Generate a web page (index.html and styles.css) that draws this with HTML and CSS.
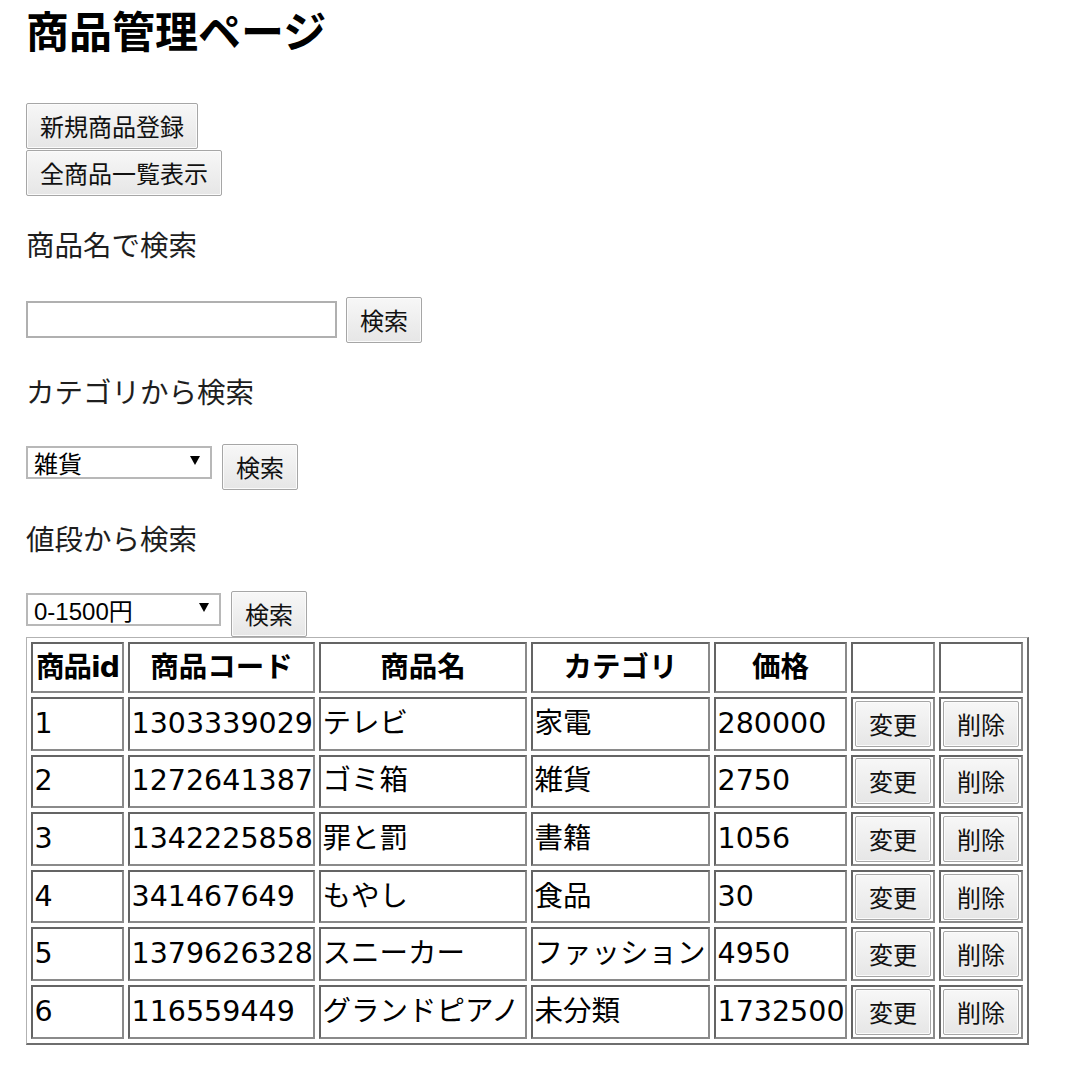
FILE: index.html
```
<!DOCTYPE html>
<html lang="ja">
<head>
<meta charset="utf-8">
<title>商品管理ページ</title>
<link rel="stylesheet" href="styles.css">
</head>
<body>
<h1 class="title">商品管理ページ</h1>

<div class="actions">
  <button class="btn" type="button">新規商品登録</button>
  <button class="btn" type="button">全商品一覧表示</button>
</div>

<p class="label">商品名で検索</p>
<div class="search-row">
  <input class="text-input" type="text">
  <button class="btn" type="button">検索</button>
</div>

<p class="label">カテゴリから検索</p>
<div class="search-row">
  <span class="select-wrap select-category">
    <select class="select">
      <option>雑貨</option>
      <option>家電</option>
      <option>書籍</option>
      <option>食品</option>
      <option>ファッション</option>
      <option>未分類</option>
    </select>
    <span class="select-arrow"></span>
  </span>
  <button class="btn" type="button">検索</button>
</div>

<p class="label">値段から検索</p>
<div class="search-row">
  <span class="select-wrap select-price">
    <select class="select">
      <option>0-1500円</option>
      <option>1501-10000円</option>
      <option>10001円以上</option>
    </select>
    <span class="select-arrow"></span>
  </span>
  <button class="btn" type="button">検索</button>
</div>

<table class="products">
  <tr class="head">
    <th class="c-id">商品id</th>
    <th class="c-code">商品コード</th>
    <th class="c-name">商品名</th>
    <th class="c-cat">カテゴリ</th>
    <th class="c-price">価格</th>
    <th class="c-edit"></th>
    <th class="c-del"></th>
  </tr>
  <tr>
    <td>1</td><td>1303339029</td><td>テレビ</td><td>家電</td><td>280000</td>
    <td><button class="btn cell-btn" type="button">変更</button></td>
    <td><button class="btn cell-btn" type="button">削除</button></td>
  </tr>
  <tr>
    <td>2</td><td>1272641387</td><td>ゴミ箱</td><td>雑貨</td><td>2750</td>
    <td><button class="btn cell-btn" type="button">変更</button></td>
    <td><button class="btn cell-btn" type="button">削除</button></td>
  </tr>
  <tr>
    <td>3</td><td>1342225858</td><td>罪と罰</td><td>書籍</td><td>1056</td>
    <td><button class="btn cell-btn" type="button">変更</button></td>
    <td><button class="btn cell-btn" type="button">削除</button></td>
  </tr>
  <tr>
    <td>4</td><td>341467649</td><td>もやし</td><td>食品</td><td>30</td>
    <td><button class="btn cell-btn" type="button">変更</button></td>
    <td><button class="btn cell-btn" type="button">削除</button></td>
  </tr>
  <tr>
    <td>5</td><td>1379626328</td><td>スニーカー</td><td>ファッション</td><td>4950</td>
    <td><button class="btn cell-btn" type="button">変更</button></td>
    <td><button class="btn cell-btn" type="button">削除</button></td>
  </tr>
  <tr>
    <td>6</td><td>116559449</td><td>グランドピアノ</td><td>未分類</td><td>1732500</td>
    <td><button class="btn cell-btn" type="button">変更</button></td>
    <td><button class="btn cell-btn" type="button">削除</button></td>
  </tr>
</table>
</body>
</html>
```

FILE: styles.css
```
html, body {
  background: #ffffff;
}

body {
  margin: 0;
  padding: 0 0 0 26px;
  font-family: "DejaVu Sans", "Noto Sans CJK JP", sans-serif;
  color: #000;
}

.title {
  margin: 0;
  font-family: "Noto Sans CJK JP", sans-serif;
  font-size: 43px;
  line-height: 58px;
  font-weight: 700;
  color: #000;
}

.actions {
  margin-top: 45px;
  display: flex;
  flex-direction: column;
  align-items: flex-start;
  gap: 1px;
}

.btn {
  box-sizing: border-box;
  height: 46px;
  padding: 0 13px;
  margin: 0;
  font-family: "Noto Sans CJK JP", sans-serif;
  font-size: 24px;
  line-height: 24px;
  color: #111;
  background: linear-gradient(#f7f7f7, #e6e6e6);
  border: 1px solid #a6a6a6;
  border-radius: 2px;
  box-shadow: inset 0 0 0 1px #fbfbfb;
  white-space: nowrap;
}

.label {
  margin: 36px 0 0;
  font-size: 28.5px;
  line-height: 29px;
  color: #1e1e1e;
}

.search-row {
  margin-top: 36px;
  display: flex;
  align-items: flex-start;
}

.text-input {
  box-sizing: border-box;
  width: 311px;
  height: 37px;
  margin: 4px 9px 0 0;
  padding: 0 4px;
  border: 2px solid #b0b0b0;
  background: #fff;
  font-size: 22px;
}

.select-wrap {
  position: relative;
  display: block;
  margin: 2px 10px 0 0;
}

.select-category { width: 186px; }
.select-price { width: 195px; }

.select {
  box-sizing: border-box;
  display: block;
  width: 100%;
  height: 33px;
  margin: 0;
  padding: 4px 0 0 6px;
  -webkit-appearance: none;
  appearance: none;
  border: 2px solid #b8b8b8;
  border-radius: 0;
  background: #fff;
  font-family: "Liberation Sans", "Noto Sans CJK JP", sans-serif;
  font-size: 24px;
  line-height: 26px;
  color: #000;
}

.select-arrow {
  position: absolute;
  top: 10px;
  right: 12px;
  width: 0;
  height: 0;
  border-left: 5px solid transparent;
  border-right: 5px solid transparent;
  border-top: 9px solid #000;
  pointer-events: none;
}

.products {
  box-sizing: border-box;
  width: 1003px;
  table-layout: fixed;
  border-collapse: separate;
  border-spacing: 4px;
  border-style: solid;
  border-width: 1px 2px 2px 1px;
  border-color: #b2b2b2 #6e6e6e #6e6e6e #b2b2b2;
  font-size: 28.5px;
  line-height: 34px;
}

.products th,
.products td {
  box-sizing: border-box;
  padding: 1.6px;
  border-style: solid;
  border-width: 2px;
  border-color: #646464 #8a8a8a #8a8a8a #646464;
  white-space: nowrap;
  vertical-align: middle;
}

.products td {
  text-align: left;
  font-weight: 400;
  height: 53.6px;
}

.products th {
  text-align: center;
  font-weight: 700;
  height: 51px;
}

.c-id { width: 93px; letter-spacing: -1px; }
.c-code { width: 187px; }
.c-name { width: 208px; }
.c-cat { width: 179px; }
.c-price { width: 133px; }
.c-edit { width: 84px; }
.c-del { width: 84px; }

.cell-btn {
  display: block;
  width: 100%;
  padding: 0;
}
```
